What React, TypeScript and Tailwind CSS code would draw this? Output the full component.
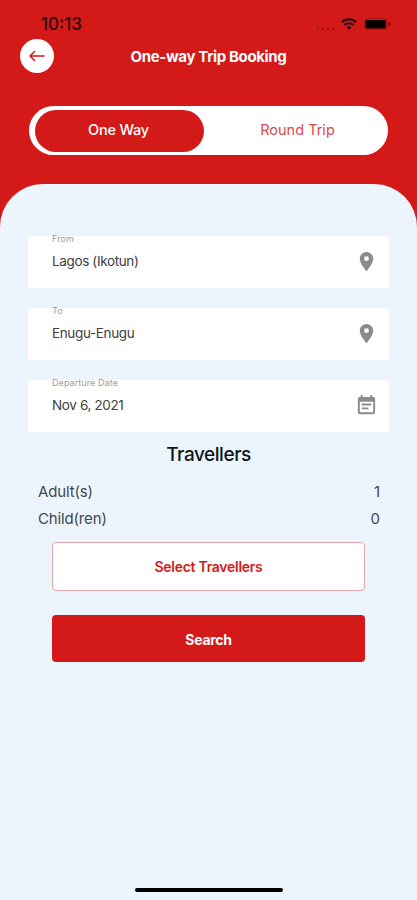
import { MdEventNote, MdLocationOn } from 'react-icons/md';

interface FieldProps {
    label: string;
    value: string;
    icon: 'pin' | 'date';
}

const Field = ({ label, value, icon }: FieldProps) => (
    <div className="flex h-[52px] items-center justify-between rounded-[3px] bg-white pl-6 pr-[11px]">
        <div className="h-full">
            <p className="-mt-[3px] h-[12px] text-[9px] leading-[12px] tracking-[0.08px] text-[#a09a9d]">{label}</p>
            <p className="mt-[6px] text-[13.5px] leading-5 tracking-[-0.36px] text-[#414141]">{value}</p>
        </div>
        {icon === 'pin' ? (
            <MdLocationOn className="mb-[2px] size-[23px] text-[#8b8b8b]" />
        ) : (
            <MdEventNote className="mb-px size-[23px] text-[#8b8b8b]" />
        )}
    </div>
);

const StatusBar = () => (
    <div className="flex h-[39px] items-start justify-between pl-[41px] pr-[26px] pt-[14px]">
        <span className="text-[17px] font-medium leading-5 text-[#2b0505]">10:13</span>
        <div className="flex h-5 items-center">
            <div className="mr-[7px] mt-[9px] flex gap-[3px]">
                {[0, 1, 2, 3].map(dot => (
                    <span key={dot} className="size-[2px] rounded-full bg-[#9d1111]" />
                ))}
            </div>
            <svg viewBox="0 0 16 12" className="mr-[7px] h-[12px] w-[16px]" fill="none" stroke="#210303" strokeWidth="2">
                <path d="M.8 4.2C4.8.2 11.2.2 15.2 4.2" />
                <path d="M3.4 7C6 4.5 10 4.5 12.6 7" />
                <path d="M8 11.8 5.5 9.3Q8 7.2 10.5 9.3Z" fill="#210303" stroke="none" />
            </svg>
            <svg viewBox="0 0 27 12" className="h-[12px] w-[27px]">
                <rect x=".5" y=".5" width="23" height="11" rx="3" fill="none" stroke="#b01313" />
                <rect x="1.5" y="2" width="20.5" height="8.5" rx="1" fill="#080000" />
                <path d="M24.5 3.5v5q2-.8 2-2.5t-2-2.5Z" fill="#7c0c0c" />
            </svg>
        </div>
    </div>
);

const travellers = [
    { label: 'Adult(s)', count: 1 },
    { label: 'Child(ren)', count: 0 },
];

const App = () => {
    return (
        <div className="flex h-[900px] w-full flex-col overflow-hidden bg-[#d41919] font-['Inter',sans-serif]">
            <StatusBar />

            <header className="grid h-[34px] grid-cols-[34px_1fr_34px] items-center px-5">
                <button className="grid size-[34px] place-items-center rounded-full bg-white" aria-label="Back">
                    <svg viewBox="0 0 16 12" className="h-3 w-4" fill="none" stroke="#d41919" strokeWidth="1.5" strokeLinecap="round" strokeLinejoin="round">
                        <path d="M15 6H1M5.5 1.5 1 6l4.5 4.5" />
                    </svg>
                </button>
                <h1 className="pt-[2px] text-center text-[15px] font-bold tracking-[-0.36px] text-white">One-way Trip Booking</h1>
            </header>

            <div className="mx-[29px] mt-[33px] flex h-[49px] shrink-0 rounded-full bg-white py-[3.5px] pl-[6px]">
                <button className="w-[169px] rounded-full bg-[#d41919] pb-[2px] pr-[2px] text-[14.5px] font-medium tracking-[-0.2px] text-white">One Way</button>
                <button className="flex-1 pb-[2px] pl-[3px] text-[14.5px] text-[#d9494c]">Round Trip</button>
            </div>

            <main className="mt-[28.5px] flex flex-1 flex-col rounded-t-[43px] bg-[#ecf5fd] px-7 pt-[52.5px]">
                <div className="flex flex-col gap-5">
                    <Field label="From" value="Lagos (Ikotun)" icon="pin" />
                    <Field label="To" value="Enugu-Enugu" icon="pin" />
                    <Field label="Departure Date" value="Nov 6, 2021" icon="date" />
                </div>

                <h2 className="mt-[9px] text-center text-[19px] font-medium leading-7 tracking-[-0.45px] text-[#10151a]">Travellers</h2>
                <div className="mt-[9px] pl-[10px] pr-[9px]">
                    {travellers.map(({ label, count }) => (
                        <div key={label} className="flex h-[27px] items-center justify-between pt-px text-[15px] text-[#42484e]">
                            <span className="tracking-[-0.15px]">{label}</span>
                            <span>{count}</span>
                        </div>
                    ))}
                </div>

                <button className="mx-6 mt-[10px] h-[49px] rounded-[4px] border border-[#e5a3a7] bg-white text-[14px] font-semibold tracking-[-0.28px] text-[#d41919]">
                    Select Travellers
                </button>
                <button className="mx-6 mt-6 h-[47px] rounded-[4px] bg-[#d41919] pt-px text-[14px] font-bold tracking-[-0.3px] text-white">
                    Search
                </button>

                <div className="mx-auto mb-2 mt-auto h-1 w-[148px] rounded-full bg-black" />
            </main>
        </div>
    );
};

export default App;
